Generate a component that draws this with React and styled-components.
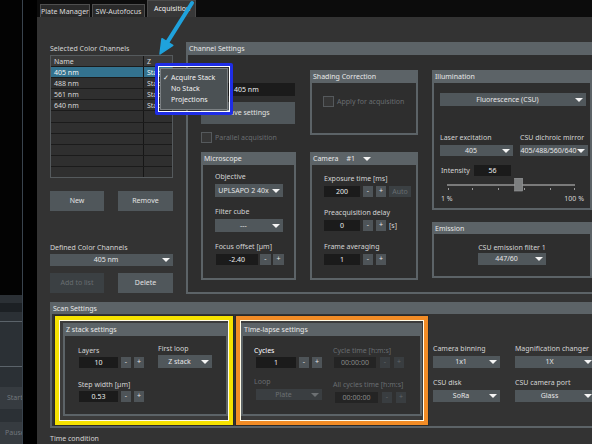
import React from 'react'
import styled, { createGlobalStyle, css } from 'styled-components'

const GlobalStyle = createGlobalStyle`
  html, body {
    margin: 0;
    padding: 0;
    background: #000;
  }
  body {
    font-family: "Noto Sans", "DejaVu Sans", sans-serif;
    font-size: 7px;
    color: #d6d6d6;
    overflow: hidden;
  }
  * {
    box-sizing: border-box;
  }
`

const GROUP_GREY = '#5c6367'

const Screen = styled.div`
  position: relative;
  display: flex;
  width: 592px;
  height: 444px;
  overflow: hidden;
  background: #000;
`

/* left strip: edge of another window */
const LeftStrip = styled.div`
  display: flex;
  flex-direction: column;
  width: 23px;
  flex-shrink: 0;
  border-right: 1px solid #39434d;
`

const StripTop = styled.div`
  height: 295px;
  background: #030303;
`

const StripPanel = styled.div`
  flex: 1;
  display: flex;
  flex-direction: column;
  background: #2b3035;
  overflow: hidden;
`

const StripRow = styled.div`
  height: ${p => p.$h}px;
  border-bottom: 1px solid #5b636a;
  display: flex;
  flex-direction: column;
  justify-content: ${p => p.$end ? 'flex-end' : 'flex-start'};
  padding-bottom: ${p => p.$end ? 3 : 0}px;
`

const StripBand = styled.div`
  height: 9px;
  margin-top: 8px;
  background: #1c2024;
`

const StripText = styled.div`
  white-space: nowrap;
  color: #e4e4e4;
  margin-left: ${p => p.$indent}px;
`

const StripButton = styled.div`
  height: 22px;
  margin-top: ${p => p.$mt}px;
  line-height: 22px;
  background: #363b40;
  color: #71777c;
  padding-left: ${p => p.$pad}px;
  white-space: nowrap;
`

const Gutter = styled.div`
  width: 14px;
  flex-shrink: 0;
`

/* main window */
const Window = styled.div`
  flex: 1;
  display: flex;
  flex-direction: column;
  overflow: hidden;
`

const TabBar = styled.div`
  height: 17px;
  flex-shrink: 0;
  display: flex;
  align-items: flex-end;
  gap: 2px;
  padding-left: 3px;
  background: #0c0c0c;
`

const Tab = styled.div`
  height: ${p => p.$active ? 17 : 13}px;
  width: ${p => p.$w}px;
  padding-left: ${p => p.$active ? 6 : 0}px;
  text-align: ${p => p.$active ? 'left' : 'center'};
  line-height: ${p => p.$active ? 16 : 13}px;
  background: ${p => p.$active ? '#383838' : '#2a2a2a'};
  border: 1px solid ${p => p.$active ? '#4a4a4a' : '#4f4f4f'};
  border-bottom: 0;
  color: ${p => p.$active ? '#f0f0f0' : '#dcdcdc'};
  white-space: nowrap;
`

const Content = styled.div`
  flex: 1;
  display: flex;
  flex-direction: column;
  padding: 25px 0 0 13px;
  background: #333333;
  overflow: hidden;
`

const TopRow = styled.div`
  display: flex;
  gap: 13px;
  height: 252px;
  flex-shrink: 0;
`

const LeftCol = styled.div`
  width: 123px;
  flex-shrink: 0;
  display: flex;
  flex-direction: column;
`

const Label = styled.div`
  height: 9px;
  line-height: 9px;
  white-space: nowrap;
  margin-top: ${p => p.$mt || 0}px;
  color: ${p => p.$disabled ? '#696d70' : p.$bright ? '#ffffff' : '#d4d4d4'};
`

const Table = styled.div`
  margin-top: 2px;
  height: 123px;
  display: flex;
  flex-direction: column;
  border: 1px solid #555a5d;
  background: #2f2f2f;
`

const TableRow = styled.div`
  flex: 1;
  display: grid;
  grid-template-columns: 92px 1fr;
  border-bottom: 1px solid #1b1b1b;
  background: ${p => p.$head ? '#3b3b3b' : p.$selected ? '#33728f' : 'transparent'};
  color: ${p => p.$selected ? '#f2f2f2' : '#d8d8d8'};
  &:last-child {
    border-bottom: 0;
  }
`

const Cell = styled.div`
  padding-left: 3px;
  display: flex;
  align-items: center;
  white-space: nowrap;
  overflow: hidden;
  & + & {
    border-left: 1px solid #161616;
  }
`

const Pair = styled.div`
  display: flex;
  justify-content: space-between;
  margin-top: ${p => p.$mt}px;
`

const Button = styled.div`
  width: ${p => p.$w}px;
  height: ${p => p.$h || 20}px;
  line-height: ${p => p.$h || 20}px;
  text-align: center;
  white-space: nowrap;
  margin-top: ${p => p.$mt || 0}px;
  background: ${p => p.$disabled ? '#3b4043' : '#50575b'};
  color: ${p => p.$disabled ? '#686d70' : '#e2e2e2'};
`

const Select = styled.div`
  position: relative;
  width: ${p => p.$w ? `${p.$w}px` : '100%'};
  height: ${p => p.$h || 12}px;
  line-height: ${p => p.$h || 12}px;
  margin-top: ${p => p.$mt || 0}px;
  margin-left: ${p => p.$ml || 0}px;
  padding-right: 11px;
  text-align: center;
  white-space: nowrap;
  overflow: hidden;
  flex-shrink: 0;
  background: ${p => p.$disabled ? '#3a3e41' : '#50575b'};
  color: ${p => p.$disabled ? '#6c7073' : '#e6e6e6'};
  &::after {
    content: '';
    position: absolute;
    right: 3px;
    top: 50%;
    margin-top: -2px;
    border-left: 4px solid transparent;
    border-right: 4px solid transparent;
    border-top: 4px solid ${p => p.$disabled ? '#6c7073' : '#f4f4f4'};
  }
`

const Field = styled.div`
  width: ${p => p.$w}px;
  height: ${p => p.$h || 11}px;
  line-height: ${p => p.$h || 11}px;
  margin-left: ${p => p.$ml || 0}px;
  flex-shrink: 0;
  background: ${p => p.$disabled ? '#242424' : '#1b1b1b'};
  color: ${p => p.$disabled ? '#8a8a8a' : '#ececec'};
  text-align: ${p => p.$left ? 'left' : 'center'};
  padding-left: ${p => p.$left ? 11 : 0}px;
  white-space: nowrap;
`

const Step = styled.div`
  width: ${p => p.$w || 10}px;
  height: 11px;
  line-height: 10px;
  text-align: center;
  flex-shrink: 0;
  background: ${p => p.$disabled ? '#393d40' : '#4e5458'};
  color: ${p => p.$disabled ? '#62676a' : '#e4e4e4'};
`

const Row = styled.div`
  display: flex;
  align-items: center;
  gap: ${p => p.$gap ?? 3}px;
  margin-top: ${p => p.$mt || 0}px;
`

const Check = styled.div`
  width: 11px;
  height: 11px;
  flex-shrink: 0;
  border: 1px solid #55595c;
  background: #363636;
`

/* group boxes */
const GroupBox = styled.div`
  display: flex;
  flex-direction: column;
  width: ${p => p.$w}px;
  height: ${p => p.$h}px;
  flex-shrink: 0;
`

const GroupTitle = styled.div`
  display: flex;
  align-items: center;
  gap: 8px;
  height: ${p => p.$th}px;
  flex-shrink: 0;
  padding-left: 3px;
  background: ${GROUP_GREY};
  color: #e8e8e8;
  white-space: nowrap;
`

const GroupBody = styled.div`
  flex: 1;
  border: 2px solid ${GROUP_GREY};
  border-top: 0;
  background: ${p => p.$bg || '#2e2e2e'};
  ${p => p.$pad && css`padding: ${p.$pad};`}
`

const Group = ({ title, w, h, th = 13, bg, pad, children }) => (
  <GroupBox $w={w} $h={h}>
    <GroupTitle $th={th}>{title}</GroupTitle>
    <GroupBody $bg={bg} $pad={pad}>{children}</GroupBody>
  </GroupBox>
)

const Caret = styled.span`
  display: inline-block;
  border-left: 4px solid transparent;
  border-right: 4px solid transparent;
  border-top: 4px solid #f4f4f4;
`

/* channel settings */
const ChannelGrid = styled.div`
  display: grid;
  grid-template-columns: 95px 108px 160px;
  grid-template-rows: 75px 128px;
  column-gap: 14px;
  row-gap: 7px;
`

const Cell2 = styled.div`
  grid-column: ${p => p.$col};
  grid-row: ${p => p.$row};
  display: flex;
  flex-direction: column;
  gap: ${p => p.$gap || 0}px;
`

const Block = styled.div`
  display: flex;
  flex-direction: column;
  gap: 3px;
  margin-top: ${p => p.$mt || 0}px;
`

const TwoCols = styled.div`
  display: grid;
  grid-template-columns: ${p => p.$cols};
  column-gap: ${p => p.$gap}px;
  row-gap: ${p => p.$rowGap || 0}px;
  margin-top: ${p => p.$mt || 0}px;
`

const Scale = styled.div`
  display: flex;
  justify-content: space-between;
  padding: 0 2px 0 1px;
  margin-top: 1px;
`

const Centered = styled.div`
  display: flex;
  flex-direction: column;
  align-items: center;
  gap: 1px;
  padding-top: 9px;
`

/* scan settings */
const ScanBody = styled.div`
  display: flex;
  align-items: flex-start;
  padding: 2px 0 0 3px;
`

const Highlight = styled.div`
  flex-shrink: 0;
  margin-left: ${p => p.$ml || 0}px;
  padding: ${p => p.$pad};
  border: 4px solid ${p => p.$color};
  box-shadow: inset 0 0 0 1px #fffbe8, 0 0 0 1px #2a2a2a;
  background: #3b3b3b;
`

const Cols = styled.div`
  display: flex;
  padding: ${p => p.$pad};
`

const Col = styled.div`
  width: ${p => p.$w ? `${p.$w}px` : 'auto'};
  display: flex;
  flex-direction: column;
  margin-top: ${p => p.$mt || 0}px;
`

const RightSettings = styled(TwoCols)`
  margin-left: 5px;
  padding-top: 28px;
`

const ScanWrap = styled.div`
  margin-top: 8px;
`

const Footer = styled.div`
  margin-top: 6px;
  color: #d4d4d4;
  white-space: nowrap;
`

/* annotation overlay */
const PopupFrame = styled.div`
  position: absolute;
  left: 155px;
  top: 63px;
  width: 78px;
  height: 52px;
  padding: 2px;
  border: 3px solid #1e2de6;
  border-radius: 2px;
  box-shadow: inset 0 0 0 1px #ffffff;
`

const Menu = styled.div`
  height: 100%;
  padding: 3px 0 0 2px;
  background: #4b5154;
  border: 1px solid #7b8083;
`

const MenuItem = styled.div`
  height: 11px;
  line-height: 11px;
  display: flex;
  color: #f2f2f2;
  white-space: nowrap;
`

const MenuCheck = styled.span`
  width: 8px;
  flex-shrink: 0;
`

const Arrow = styled.svg`
  position: absolute;
  left: 150px;
  top: 0;
`

const Slider = ({ value }) => {
  const x = 7 + (value / 100) * 128 - 4
  return (
    <svg width="148" height="15" style={{ display: 'block', marginTop: 2 }}>
      <rect x="7" y="6" width="128" height="2" fill="#7a7a7a" />
      {[8, 32, 58, 84, 110, 134].map(t => (
        <rect key={t} x={t} y="10" width="1" height="2" fill="#9a9a9a" />
      ))}
      <rect x={x} y="0" width="8" height="13" fill="#7d7f80" stroke="#9a9c9d" strokeWidth="0.6" />
    </svg>
  )
}

const channels = ['405 nm', '488 nm', '561 nm', '640 nm']

export default function App () {
  return (
    <Screen>
      <GlobalStyle />
      <LeftStrip>
        <StripTop />
        <StripPanel>
          <StripRow $h={28}><StripBand /></StripRow>
          <StripRow $h={46} $end><StripText $indent={-27}>Position</StripText></StripRow>
          <StripButton $mt={20} $pad={7}>Start</StripButton>
          <StripButton $mt={13} $pad={5}>Pause</StripButton>
        </StripPanel>
      </LeftStrip>
      <Gutter />
      <Window>
        <TabBar>
          <Tab $w={50}>Plate Manager</Tab>
          <Tab $w={53}>SW-Autofocus</Tab>
          <Tab $w={49} $active>Acquisition</Tab>
        </TabBar>
        <Content>
          <TopRow>
            <LeftCol>
              <Label $mt={2}>Selected Color Channels</Label>
              <Table>
                <TableRow $head><Cell>Name</Cell><Cell>Z</Cell></TableRow>
                {channels.map((c, i) => (
                  <TableRow key={c} $selected={i === 0}><Cell>{c}</Cell><Cell>Stack</Cell></TableRow>
                ))}
                {Array.from({ length: 6 }).map((_, i) => (
                  <TableRow key={i}><Cell /><Cell /></TableRow>
                ))}
              </Table>
              <Pair $mt={13}>
                <Button $w={54}>New</Button>
                <Button $w={55}>Remove</Button>
              </Pair>
              <Label $mt={32}>Defined Color Channels</Label>
              <Select $mt={2}>405 nm</Select>
              <Pair $mt={7}>
                <Button $w={54} $disabled>Add to list</Button>
                <Button $w={55}>Delete</Button>
              </Pair>
            </LeftCol>

            <Group title="Channel Settings" w={420} h={252} pad="15px 0 0 13px">
              <ChannelGrid>
                <Cell2 $col={1} $row={1}>
                  <Row $mt={13} $gap={0}>
                    <Label style={{ width: 22 }}>Name</Label>
                    <Field $w={72} $h={13} $left>405 nm</Field>
                  </Row>
                  <Button $w={94} $h={22} $mt={6}>Save settings</Button>
                  <Row $mt={8}>
                    <Check />
                    <Label $disabled>Parallel acquisition</Label>
                  </Row>
                </Cell2>

                <Cell2 $col={2} $row={1}>
                  <Group title="Shading Correction" w={108} h={65} pad="13px 0 0 11px">
                    <Row>
                      <Check />
                      <Label $disabled>Apply for acquisition</Label>
                    </Row>
                  </Group>
                </Cell2>

                <Cell2 $col={3} $row="1 / span 2" $gap={12}>
                  <Group title="Illumination" w={160} h={140} pad="10px 4px 0 6px">
                    <Select $h={13}>Fluorescence (CSU)</Select>
                    <TwoCols $cols="73px 68px" $gap={7} $mt={27}>
                      <Block>
                        <Label>Laser excitation</Label>
                        <Select $h={11}>405</Select>
                      </Block>
                      <Block>
                        <Label>CSU dichroic mirror</Label>
                        <Select $h={11}>405/488/560/640</Select>
                      </Block>
                    </TwoCols>
                    <Row $mt={9} $gap={0}>
                      <Label style={{ width: 34, paddingLeft: 1 }}>Intensity</Label>
                      <Field $w={37}>56</Field>
                    </Row>
                    <Slider value={56} />
                    <Scale>
                      <span>1 %</span>
                      <span>100 %</span>
                    </Scale>
                  </Group>
                  <Group title="Emission" w={160} h={56} th={12}>
                    <Centered>
                      <Label>CSU emission filter 1</Label>
                      <Select $w={68}>447/60</Select>
                    </Centered>
                  </Group>
                </Cell2>

                <Cell2 $col={1} $row={2}>
                  <Group title="Microscope" w={95} h={128} pad="7px 0 0 12px">
                    <Block>
                      <Label>Objective</Label>
                      <Select $w={68} $h={13}>UPLSAPO 2 40x</Select>
                    </Block>
                    <Block $mt={10}>
                      <Label>Filter cube</Label>
                      <Select $w={68} $h={13}>---</Select>
                    </Block>
                    <Block $mt={10}>
                      <Label>Focus offset [µm]</Label>
                      <Row $gap={2}>
                        <Field $w={42} $ml={1}>-2.40</Field>
                        <Step $w={11}>-</Step>
                        <Step $w={11}>+</Step>
                      </Row>
                    </Block>
                  </Group>
                </Cell2>

                <Cell2 $col={2} $row={2}>
                  <Group
                    title={<><span>Camera</span><span>#1</span><Caret /></>}
                    w={108} h={128} pad="9px 0 0 12px"
                  >
                    <Block>
                      <Label>Exposure time [ms]</Label>
                      <Row>
                        <Field $w={36}>200</Field>
                        <Step>-</Step>
                        <Step>+</Step>
                        <Button $w={22} $h={11} $disabled>Auto</Button>
                      </Row>
                    </Block>
                    <Block $mt={11}>
                      <Label>Preacquisition delay</Label>
                      <Row>
                        <Field $w={36}>0</Field>
                        <Step>-</Step>
                        <Step>+</Step>
                        <span>[s]</span>
                      </Row>
                    </Block>
                    <Block $mt={11}>
                      <Label>Frame averaging</Label>
                      <Row>
                        <Field $w={36}>1</Field>
                        <Step>-</Step>
                        <Step>+</Step>
                      </Row>
                    </Block>
                  </Group>
                </Cell2>
              </ChannelGrid>
            </Group>
          </TopRow>

          <ScanWrap>
            <Group title="Scan Settings" w={560} h={126} th={12} bg="#333333">
              <ScanBody>
                <Highlight $color="#f6e200" $pad="3px 1px 5px 4px">
                  <Group title="Z stack settings" w={165} h={93} bg="#303030">
                    <Cols $pad="10px 0 0 13px">
                      <Col $w={80}>
                        <Label>Layers</Label>
                        <Row $mt={2}>
                          <Field $w={39} $ml={1}>10</Field>
                          <Step>-</Step>
                          <Step>+</Step>
                        </Row>
                        <Label $mt={12}>Step width [µm]</Label>
                        <Row $mt={2}>
                          <Field $w={39} $ml={1}>0.53</Field>
                          <Step>-</Step>
                          <Step>+</Step>
                        </Row>
                      </Col>
                      <Col $mt={-2}>
                        <Label>First loop</Label>
                        <Select $w={54} $h={13} $mt={2}>Z stack</Select>
                      </Col>
                    </Cols>
                  </Group>
                </Highlight>

                <Highlight $color="#f28c26" $ml={3} $pad="3px 2px 5px 1px">
                  <Group title="Time-lapse settings" w={181} h={93} bg="#303030">
                    <Cols $pad="10px 0 0 11px">
                      <Col $w={79}>
                        <Label $bright>Cycles</Label>
                        <Row $mt={2}>
                          <Field $w={40} $ml={2}>1</Field>
                          <Step>-</Step>
                          <Step>+</Step>
                        </Row>
                        <Label $mt={9} $disabled>Loop</Label>
                        <Select $w={66} $h={11} $ml={2} $mt={3} $disabled>Plate</Select>
                      </Col>
                      <Col>
                        <Label $disabled>Cycle time [h:m:s]</Label>
                        <Row $mt={2} $gap={4}>
                          <Field $w={42} $ml={1} $disabled>00:00:00</Field>
                          <Step $disabled>-</Step>
                          <Step $disabled>+</Step>
                        </Row>
                        <Label $mt={12} $disabled>All cycles time [h:m:s]</Label>
                        <Row $mt={3} $gap={4}>
                          <Field $w={43} $ml={2} $disabled>00:00:00</Field>
                          <Step $disabled>-</Step>
                          <Step $disabled>+</Step>
                        </Row>
                      </Col>
                    </Cols>
                  </Group>
                </Highlight>

                <RightSettings $cols="67px 80px" $gap={15} $rowGap={10}>
                  <Block>
                    <Label>Camera binning</Label>
                    <Select $h={12}>1x1</Select>
                  </Block>
                  <Block>
                    <Label>Magnification changer</Label>
                    <Select $h={12}>1X</Select>
                  </Block>
                  <Block>
                    <Label>CSU disk</Label>
                    <Select $h={12}>SoRa</Select>
                  </Block>
                  <Block>
                    <Label>CSU camera port</Label>
                    <Select $h={12}>Glass</Select>
                  </Block>
                </RightSettings>
              </ScanBody>
            </Group>
          </ScanWrap>

          <Footer>Time condition</Footer>
        </Content>
      </Window>

      <PopupFrame>
        <Menu>
          <MenuItem><MenuCheck>✓</MenuCheck>Acquire Stack</MenuItem>
          <MenuItem><MenuCheck />No Stack</MenuItem>
          <MenuItem><MenuCheck />Projections</MenuItem>
        </Menu>
      </PopupFrame>

      <Arrow width="50" height="60" viewBox="0 0 50 60">
        <line x1="42" y1="3" x2="17.4" y2="42.1" stroke="#1fa2dc" strokeWidth="4" strokeLinecap="round" />
        <polygon points="10,54 22.8,45.5 12,38.7" fill="#1fa2dc" stroke="#1fa2dc" strokeWidth="1.5" strokeLinejoin="round" />
      </Arrow>
    </Screen>
  )
}
